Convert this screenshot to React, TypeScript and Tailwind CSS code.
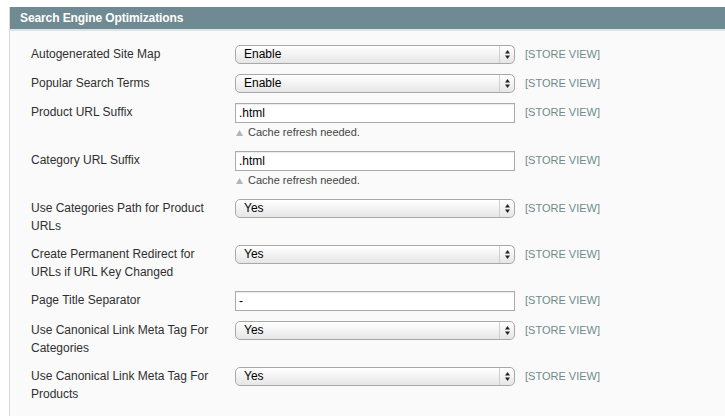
import React from 'react';

type Row =
  | { label: string; kind: 'select'; value: string }
  | { label: string; kind: 'input'; value: string; note?: string };

const rows: Row[] = [
  { label: 'Autogenerated Site Map', kind: 'select', value: 'Enable' },
  { label: 'Popular Search Terms', kind: 'select', value: 'Enable' },
  { label: 'Product URL Suffix', kind: 'input', value: '.html', note: 'Cache refresh needed.' },
  { label: 'Category URL Suffix', kind: 'input', value: '.html', note: 'Cache refresh needed.' },
  { label: 'Use Categories Path for Product URLs', kind: 'select', value: 'Yes' },
  { label: 'Create Permanent Redirect for URLs if URL Key Changed', kind: 'select', value: 'Yes' },
  { label: 'Page Title Separator', kind: 'input', value: '-' },
  { label: 'Use Canonical Link Meta Tag For Categories', kind: 'select', value: 'Yes' },
  { label: 'Use Canonical Link Meta Tag For Products', kind: 'select', value: 'Yes' },
];

function FakeSelect({ value }: { value: string }) {
  return (
    <div className="flex h-[19px] w-[280px] items-stretch rounded-[5px] border border-[#a8a8a8] bg-gradient-to-b from-[#ffffff] via-[#f3f3f3] to-[#e6e6e6] shadow-[inset_0_1px_0_#fff]">
      <span className="flex-1 pl-[8px] text-[12px] leading-[17px] text-black">{value}</span>
      <span className="flex w-[15px] flex-col items-center justify-center border-l border-[#cfcfcf]">
        <svg width="7" height="11" viewBox="0 0 7 11">
          <path d="M3.5 1 L6 4.5 L1 4.5 Z" fill="#222" />
          <path d="M3.5 10 L6 6.5 L1 6.5 Z" fill="#222" />
        </svg>
      </span>
    </div>
  );
}

function FakeInput({ value }: { value: string }) {
  return (
    <div className="h-[20px] w-[280px] border border-[#aaaaaa] bg-white pl-[3px] text-[12px] leading-[18px] text-black shadow-[inset_0_1px_1px_rgba(0,0,0,0.08)]">
      {value}
    </div>
  );
}

export default function App() {
  return (
    <div className="h-[416px] w-[725px] overflow-hidden bg-white pt-[7px] pl-[9px] font-['Liberation_Sans',Arial,sans-serif]">
      <div className="h-full border-l border-[#d9d9d9] bg-[#fafafa]">
        <div className="h-[22px] bg-[#6f8a92] pl-[10px] text-[12px] font-bold leading-[22px] tracking-[-0.1px] text-white">
          Search Engine Optimizations
        </div>
        <div className="h-[2px] bg-[#dde4e8]" />
        <div className="flex flex-col gap-[10px] pt-[14px] pl-[21px]">
          {rows.map((r) => (
            <div key={r.label} className="flex items-start">
              <div className="w-[204px] pr-[14px] text-[12px] leading-[18px] text-[#2f2f2f]">{r.label}</div>
              <div className="flex w-[280px] flex-col">
                {r.kind === 'select' ? <FakeSelect value={r.value} /> : <FakeInput value={r.value} />}
                {r.kind === 'input' && r.note && (
                  <div className="flex items-center pt-[1px] text-[11px] leading-[17px] text-[#444]">
                    <svg width="7" height="6" viewBox="0 0 7 6" className="mr-[5px] ml-[1px]">
                      <path d="M3.5 0 L7 6 L0 6 Z" fill="#b3b3b3" />
                    </svg>
                    {r.note}
                  </div>
                )}
              </div>
              <div className="pl-[10px] text-[11px] leading-[19px] text-[#6f8a8c]">[STORE VIEW]</div>
            </div>
          ))}
        </div>
      </div>
    </div>
  );
}
